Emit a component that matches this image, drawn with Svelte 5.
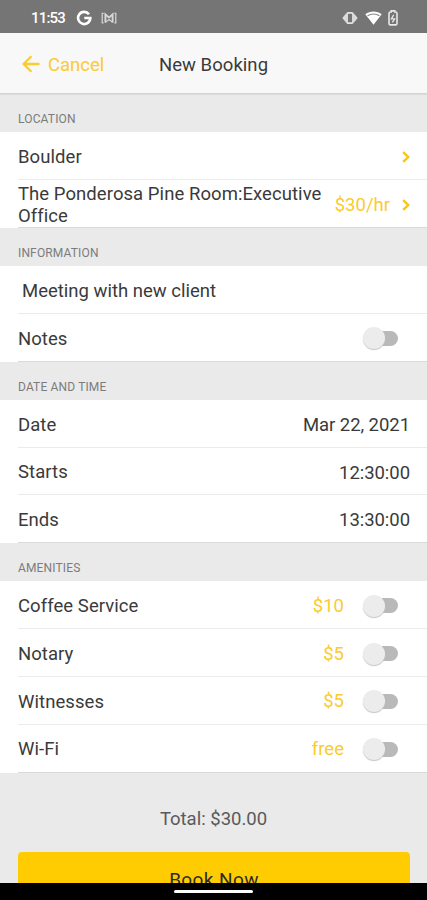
<script lang="ts">
  interface Row {
    label: string;
    value?: string;
    price?: string;
    chevron?: boolean;
    toggle?: boolean;
    input?: boolean;
  }

  interface Section {
    title: string;
    rows: Row[];
  }

  const sections: Section[] = [
    {
      title: 'Location',
      rows: [
        { label: 'Boulder', chevron: true },
        { label: 'The Ponderosa Pine Room:Executive Office', price: '$30/hr', chevron: true },
      ],
    },
    {
      title: 'Information',
      rows: [
        { label: 'Meeting with new client', input: true },
        { label: 'Notes', toggle: true },
      ],
    },
    {
      title: 'Date and time',
      rows: [
        { label: 'Date', value: 'Mar 22, 2021' },
        { label: 'Starts', value: '12:30:00' },
        { label: 'Ends', value: '13:30:00' },
      ],
    },
    {
      title: 'Amenities',
      rows: [
        { label: 'Coffee Service', price: '$10', toggle: true },
        { label: 'Notary', price: '$5', toggle: true },
        { label: 'Witnesses', price: '$5', toggle: true },
        { label: 'Wi-Fi', price: 'free', toggle: true },
      ],
    },
  ];

  let enabled = $state<Record<string, boolean>>({});

  function flip(label: string) {
    enabled[label] = !enabled[label];
  }
</script>

<div class="screen">
  <div class="status-bar">
    <span class="clock">11:53</span>
    <svg class="google" viewBox="0 0 16 16">
      <path d="M13 4.2A6.1 6.1 0 1 0 14.3 8H8.3" />
    </svg>
    <svg class="mail" viewBox="0 0 16 12">
      <path class="envelope" d="M4.4 10.6V2.4L8 5.6l3.6-3.2v8.2" />
      <path d="M2.6 1.3H1.2v9.6h1.4M13.4 1.3h1.4v9.6h-1.4M4.4 10.4L8 7.6l3.6 2.8" />
    </svg>
    <span class="spacer"></span>
    <svg class="vibrate" viewBox="0 0 16 14">
      <path d="M4 2.6L0.3 7 4 11.4zM12 2.6L15.7 7 12 11.4z" />
      <rect x="5" y="1.8" width="6" height="10.4" rx="1.4" />
    </svg>
    <svg class="wifi" viewBox="0 0 17 14">
      <path d="M0.3 3.2C5 -0.5 12 -0.5 16.7 3.2L8.5 13.8z" />
      <path class="arc" d="M2.6 4.7C6 2.4 11 2.4 14.4 4.7" />
    </svg>
    <svg class="battery" viewBox="0 0 10 16">
      <path d="M3.2 2V0.9h3.6V2H7.5a1.5 1.5 0 0 1 1.5 1.5v9.9a1.5 1.5 0 0 1-1.5 1.5h-5A1.5 1.5 0 0 1 1 13.4V3.5A1.5 1.5 0 0 1 2.5 2z" />
      <path class="bolt" d="M5.7 4.8L3.4 8.9h3.2L4.4 12.4" />
    </svg>
  </div>

  <header>
    <button class="cancel">
      <svg viewBox="0 0 18 18">
        <path d="M17.5 9H1.8M9.4 1.2L1.6 9l7.8 7.8" />
      </svg>
      Cancel
    </button>
    <h1>New Booking</h1>
  </header>

  <main>
    {#each sections as section (section.title)}
      <section>
        <h2>{section.title}</h2>
        <div class="rows">
          {#each section.rows as row (row.label)}
            <div class="row">
              <span class="label" class:input={row.input}>{row.label}</span>
              {#if row.price}
                <span class="price">{row.price}</span>
              {/if}
              {#if row.value}
                <span class="value">{row.value}</span>
              {/if}
              {#if row.chevron}
                <svg class="chevron" viewBox="0 0 8 12">
                  <path d="M1.2 1.2L6.2 6l-5 4.8" />
                </svg>
              {/if}
              {#if row.toggle}
                <button
                  class="toggle"
                  class:on={enabled[row.label]}
                  aria-label={row.label}
                  onclick={() => flip(row.label)}
                >
                  <span class="thumb"></span>
                </button>
              {/if}
            </div>
          {/each}
        </div>
      </section>
    {/each}

    <p class="total">Total: $30.00</p>
    <button class="book">Book Now</button>
  </main>

  <div class="nav-bar"><span class="handle"></span></div>
</div>

<style>
  .screen {
    width: 427px;
    height: 900px;
    display: flex;
    flex-direction: column;
    overflow: hidden;
    background: #eaeaea;
    color: #3a3a3a;
    font-family: Roboto, sans-serif;
    font-size: 18.5px;
  }

  button {
    font: inherit;
    border: none;
    padding: 0;
    cursor: pointer;
  }

  svg {
    display: block;
    flex-shrink: 0;
    fill: none;
  }

  .status-bar {
    flex-shrink: 0;
    height: 33px;
    box-sizing: border-box;
    display: flex;
    align-items: center;
    padding: 3px 29px 0 31px;
    background: #757575;
    color: #fff;
  }

  .clock {
    width: 34px;
    font-size: 15px;
    font-weight: 500;
    letter-spacing: -0.8px;
    white-space: nowrap;
  }

  .google {
    width: 16px;
    height: 16px;
    margin-left: 11px;
    stroke: #fff;
    stroke-width: 2.6;
  }

  .mail {
    width: 16px;
    height: 12px;
    margin-left: 9px;
    stroke: #d8d8d8;
    stroke-width: 1.2;
  }

  .mail .envelope {
    stroke-width: 1.9;
  }

  .spacer {
    flex: 1;
  }

  .vibrate {
    width: 16px;
    height: 14px;
    fill: #dcdcdc;
  }

  .vibrate rect {
    fill: #757575;
    stroke: #e4e4e4;
    stroke-width: 1.8;
  }

  .wifi {
    width: 17px;
    height: 14px;
    margin-left: 7px;
    fill: #fff;
  }

  .wifi .arc {
    fill: none;
    stroke: #8a8a8a;
    stroke-width: 1.2;
  }

  .battery {
    width: 10px;
    height: 16px;
    margin-left: 6px;
    stroke: #e8e8e8;
    stroke-width: 1.6;
  }

  .battery .bolt {
    stroke-width: 1.3;
  }

  header {
    flex-shrink: 0;
    height: 61px;
    display: grid;
    grid-template-columns: 1fr auto 1fr;
    align-items: center;
    padding: 3px 22px 0;
    background: #f8f8f8;
    border-bottom: 1px solid #d4d4d4;
    box-sizing: border-box;
    box-shadow: 0 1px 1px #dedede;
    z-index: 1;
  }

  .cancel {
    display: flex;
    align-items: center;
    gap: 8px;
    background: none;
    color: #fccb2d;
  }

  .cancel svg {
    width: 18px;
    height: 18px;
    margin-top: -2px;
    stroke: #fccb2d;
    stroke-width: 2.3;
  }

  h1 {
    margin: 0;
    font-size: 18.5px;
    font-weight: 400;
    letter-spacing: 0.05px;
  }

  main {
    flex: 1;
    min-height: 0;
    overflow: hidden;
    padding-top: 0.4px;
  }

  h2 {
    height: 38.1px;
    box-sizing: border-box;
    margin: 0;
    padding: 18px 18px 0;
    color: #7c7c7c;
    font-size: 12px;
    font-weight: 400;
    line-height: 14px;
    letter-spacing: 0.15px;
    text-transform: uppercase;
  }

  .rows {
    background: #fff;
  }

  .row {
    height: 47.8px;
    box-sizing: border-box;
    display: flex;
    align-items: center;
    margin-left: 18px;
    padding: 2px 17px 0 0;
    border-bottom: 1px solid #ebebeb;
  }

  .row:last-child {
    border-bottom-color: #dadada;
  }

  .label {
    flex: 1;
    padding-top: 2px;
    line-height: 21.5px;
    letter-spacing: 0.06px;
  }

  .label.input {
    padding-left: 4px;
    letter-spacing: 0;
  }

  .value {
    padding-top: 1px;
    letter-spacing: -0.05px;
  }

  .price {
    color: #fccb2d;
  }

  .chevron {
    width: 8px;
    height: 12px;
    margin-left: 12px;
    stroke: #fcc30f;
    stroke-width: 2.4;
  }

  .toggle {
    position: relative;
    width: 35px;
    height: 23px;
    display: flex;
    align-items: center;
    margin: 0 12px 0 19px;
    background: none;
  }

  .toggle::before {
    content: '';
    position: absolute;
    inset: 4px 0 4px 6px;
    border-radius: 8px;
    background: #b9b9b9;
  }

  .thumb {
    position: relative;
    width: 22px;
    height: 22px;
    border-radius: 50%;
    background: #ececec;
    box-shadow: 0 1px 1px #c4c4c4;
  }

  .toggle.on {
    justify-content: flex-end;
  }

  .toggle.on .thumb {
    background: #fc0;
  }

  .total {
    margin: 36px 0 0;
    color: #5a5a5a;
    line-height: 21px;
    text-align: center;
  }

  .book {
    display: block;
    width: 392px;
    height: 55px;
    margin: 22px 0 0 18px;
    border-radius: 4px;
    background: #ffcc02;
    color: #2b2b2b;
    font-size: 19px;
    letter-spacing: 0.4px;
  }

  .nav-bar {
    flex-shrink: 0;
    height: 17px;
    display: flex;
    align-items: center;
    justify-content: center;
    background: #000;
  }

  .handle {
    width: 79px;
    height: 3px;
    border-radius: 2px;
    background: #fff;
  }
</style>
